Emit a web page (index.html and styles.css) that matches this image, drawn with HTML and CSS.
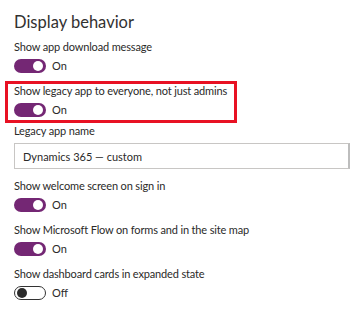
FILE: index.html
```html
<!DOCTYPE html>
<html>
<head>
<meta charset="utf-8">
<link rel="stylesheet" href="styles.css">
</head>
<body>
<div class="panel">
  <h1 class="title">Display behavior</h1>
  <div class="group">
    <div class="label">Show app download message</div>
    <div class="toggle-row"><span class="toggle on"><span class="knob"></span></span><span class="state">On</span></div>
  </div>
  <div class="group highlight">
    <div class="label">Show legacy app to everyone, not just admins</div>
    <div class="toggle-row"><span class="toggle on"><span class="knob"></span></span><span class="state">On</span></div>
  </div>
  <div class="group field">
    <div class="label">Legacy app name</div>
    <div class="input">Dynamics 365 — custom</div>
  </div>
  <div class="group">
    <div class="label">Show welcome screen on sign in</div>
    <div class="toggle-row"><span class="toggle on"><span class="knob"></span></span><span class="state">On</span></div>
  </div>
  <div class="group">
    <div class="label">Show Microsoft Flow on forms and in the site map</div>
    <div class="toggle-row"><span class="toggle on"><span class="knob"></span></span><span class="state">On</span></div>
  </div>
  <div class="group">
    <div class="label">Show dashboard cards in expanded state</div>
    <div class="toggle-row"><span class="toggle off"><span class="knob"></span></span><span class="state">Off</span></div>
  </div>
</div>
</body>
</html>
```
FILE: styles.css
```css
html, body {
  margin: 0;
  padding: 0;
  background: #ffffff;
}
body {
  font-family: Lato, "Open Sans", sans-serif;
  color: #2b2a29;
  font-size: 11px;
}
.panel {
  padding: 12px 14px 0 14px;
  display: flex;
  flex-direction: column;
}
.title {
  margin: 0 0 8px 0;
  font-size: 16.5px;
  font-weight: 400;
  line-height: 20px;
  color: #323130;
}
.group {
  display: flex;
  flex-direction: column;
  gap: 4px;
  margin-bottom: 10px;
}
.label {
  line-height: 14px;
  letter-spacing: -0.15px;
}
.toggle-row {
  display: flex;
  align-items: center;
  gap: 6px;
  height: 16px;
}
.toggle {
  box-sizing: border-box;
  width: 32px;
  height: 14px;
  border-radius: 7px;
  display: flex;
  align-items: center;
  padding: 0 3px;
}
.toggle.on {
  background: #742774;
  justify-content: flex-end;
}
.toggle.off {
  border: 1px solid #333333;
  justify-content: flex-start;
  padding: 0 2px;
}
.knob {
  width: 10px;
  height: 10px;
  border-radius: 50%;
}
.toggle.on .knob { background: #ffffff; }
.toggle.off .knob { background: #2b2b2b; }
.state {
  line-height: 14px;
}
.highlight {
  border: 3px solid #e81123;
  margin: -3px 0 1px -9px;
  padding: 0 0 2px 6px;
  width: 220px;
}
.field {
  gap: 5px;
  margin-bottom: 10px;
}
.input {
  box-sizing: border-box;
  height: 26px;
  border: 1px solid #c8c6c4;
  border-right: 2px solid #bdbdbd;
  padding: 0 8px;
  display: flex;
  align-items: center;
  width: 336px;
}
.group.flow {
  margin-top: 1px;
}
```
